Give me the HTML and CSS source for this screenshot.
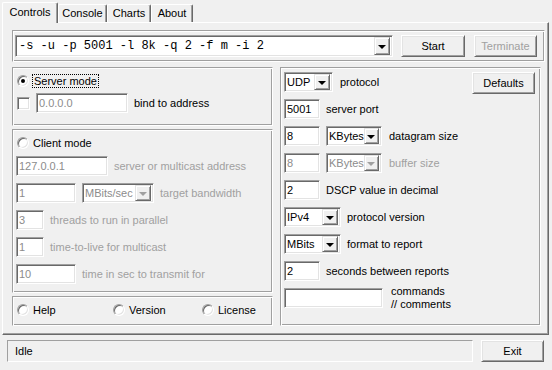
FILE: index.html
```html
<!DOCTYPE html>
<html lang="en">
<head>
    <meta charset="UTF-8">
    <title>Iperf</title>
    <link rel="stylesheet" href="styles.css">
</head>
<body>
<div class="window">
    <div class="tabs">
        <div class="tab active t-controls">Controls</div>
        <div class="tab t-console">Console</div>
        <div class="tab t-charts">Charts</div>
        <div class="tab t-about">About</div>
    </div>

    <div class="page">
        <div class="cmd-frame">
            <div class="combo cmd-combo">
                <span class="combo-text">-s -u -p 5001 -l 8k -q 2 -f m -i 2</span>
                <span class="arrow-btn"><span class="tri"></span></span>
            </div>
            <div class="btn start">Start</div>
            <div class="btn terminate disabled">Terminate</div>
        </div>

        <div class="panels">
            <div class="left-col">
                <div class="frame server-frame">
                    <div class="row radio-row">
                        <span class="radio checked"></span>
                        <span class="focus">Server mode</span>
                    </div>
                    <div class="row">
                        <span class="check"></span>
                        <span class="edit dim w92">0.0.0.0</span>
                        <span class="label">bind to address</span>
                    </div>
                </div>

                <div class="frame client-frame">
                    <div class="row radio-row">
                        <span class="radio"></span>
                        <span class="label">Client mode</span>
                    </div>
                    <div class="row">
                        <span class="edit dim w92">127.0.0.1</span>
                        <span class="label gray">server or multicast address</span>
                    </div>
                    <div class="row">
                        <span class="edit dim w60">1</span>
                        <span class="combo w72 disabled"><span class="combo-text">MBits/sec</span><span class="arrow-btn"><span class="tri"></span></span></span>
                        <span class="label gray">target bandwidth</span>
                    </div>
                    <div class="row">
                        <span class="edit dim w27">3</span>
                        <span class="label gray">threads to run in parallel</span>
                    </div>
                    <div class="row">
                        <span class="edit dim w27">1</span>
                        <span class="label gray">time-to-live for multicast</span>
                    </div>
                    <div class="row">
                        <span class="edit dim w60">10</span>
                        <span class="label gray">time in sec to transmit for</span>
                    </div>
                </div>

                <div class="frame help-frame">
                    <div class="opt"><span class="radio"></span><span class="label">Help</span></div>
                    <div class="opt version"><span class="radio"></span><span class="label">Version</span></div>
                    <div class="opt license"><span class="radio"></span><span class="label">License</span></div>
                </div>
            </div>

            <div class="frame right-col">
                <div class="row">
                    <span class="combo w49"><span class="combo-text">UDP</span><span class="arrow-btn"><span class="tri"></span></span></span>
                    <span class="label">protocol</span>
                    <div class="btn defaults">Defaults</div>
                </div>
                <div class="row">
                    <span class="edit w36">5001</span>
                    <span class="label">server port</span>
                </div>
                <div class="row">
                    <span class="edit w36">8</span>
                    <span class="combo w56"><span class="combo-text">KBytes</span><span class="arrow-btn"><span class="tri"></span></span></span>
                    <span class="label">datagram size</span>
                </div>
                <div class="row">
                    <span class="edit dim w36">8</span>
                    <span class="combo w56 disabled"><span class="combo-text">KBytes</span><span class="arrow-btn"><span class="tri"></span></span></span>
                    <span class="label gray">buffer size</span>
                </div>
                <div class="row">
                    <span class="edit w36">2</span>
                    <span class="label">DSCP value in decimal</span>
                </div>
                <div class="row">
                    <span class="combo w57"><span class="combo-text">IPv4</span><span class="arrow-btn"><span class="tri"></span></span></span>
                    <span class="label">protocol version</span>
                </div>
                <div class="row">
                    <span class="combo w57"><span class="combo-text">MBits</span><span class="arrow-btn"><span class="tri"></span></span></span>
                    <span class="label">format to report</span>
                </div>
                <div class="row">
                    <span class="edit w36">2</span>
                    <span class="label">seconds between reports</span>
                </div>
                <div class="row">
                    <span class="edit w99"></span>
                    <span class="label two-line">commands<br>// comments</span>
                </div>
            </div>
        </div>
    </div>

    <div class="statusbar">
        <div class="status-text">Idle</div>
        <div class="btn exit">Exit</div>
    </div>
</div>
</body>
</html>
```

FILE: styles.css
```css
/* classic windows dialog */
body {
    margin: 0;
    background-color: #f0f0f0;
    font: 11px "Liberation Sans", Arial, sans-serif;
    color: #000;
}
.window {
    width: 552px;
    height: 370px;
    overflow: hidden;
}

/* tabs */
.tabs {
    display: flex;
    align-items: flex-end;
    height: 22px;
    padding-left: 2px;
    position: relative;
    z-index: 1;
}
.tab {
    height: 18px;
    line-height: 17px;
    text-align: center;
    box-sizing: border-box;
    border-top: 1px solid #fff;
    border-left: 1px solid #fff;
    border-right: 1px solid #696969;
    box-shadow: inset -1px 0 #a0a0a0;
    border-radius: 2px 2px 0 0;
    flex: none;
}
.tab.active {
    height: 21px;
    line-height: 18px;
    margin-bottom: -1px;
    background: #f0f0f0;
}
.t-controls { width: 56px; }
.t-console { width: 49px; }
.t-charts { width: 44px; }
.t-about { width: 42px; }

/* tab page */
.page {
    margin-left: 2px;
    width: 547px;
    height: 313px;
    box-sizing: border-box;
    border: 1px solid;
    border-color: #fff #696969 #696969 #fff;
    box-shadow: inset -1px -1px #a0a0a0;
    padding: 7px 3px 0 9px;
}

.frame {
    box-sizing: border-box;
    border: 1px solid;
    border-color: #a0a0a0 #fff #fff #a0a0a0;
    box-shadow: inset 1px 1px #fff, inset -1px -1px #a0a0a0;
}

.cmd-frame {
    display: flex;
    height: 32px;
    box-sizing: border-box;
    border: 1px solid;
    border-color: #a0a0a0 #fff #fff #a0a0a0;
    box-shadow: inset 1px 1px #fff, inset -1px -1px #a0a0a0;
    padding: 4px 0 0 2px;
}

/* controls */
.edit, .combo {
    display: flex;
    align-items: center;
    height: 20px;
    box-sizing: border-box;
    background: #fff;
    border: 1px solid;
    border-color: #a0a0a0 #fff #fff #a0a0a0;
    box-shadow: inset 1px 1px #696969, inset -1px -1px #e3e3e3;
    padding: 0 2px 0 2px;
    white-space: nowrap;
    flex: none;
}
.edit.dim, .combo.disabled .combo-text {
    color: #8c8c8c;
}
.combo {
    padding-right: 2px;
}
.combo-text {
    flex: 1;
}
.arrow-btn {
    width: 16px;
    height: 16px;
    box-sizing: border-box;
    display: flex;
    align-items: center;
    justify-content: center;
    background: #f0f0f0;
    border: 1px solid;
    border-color: #e3e3e3 #696969 #696969 #e3e3e3;
    box-shadow: inset 1px 1px #fff, inset -1px -1px #a0a0a0;
}
.tri {
    width: 0;
    height: 0;
    border-left: 4px solid transparent;
    border-right: 4px solid transparent;
    border-top: 4px solid #000;
    margin-top: 1px;
}
.combo.disabled .tri {
    border-top-color: #a0a0a0;
}

.cmd-combo {
    width: 378px;
    height: 22px;
    padding-left: 3px;
    font: 12px "Liberation Mono", "Courier New", monospace;
}
.cmd-combo .arrow-btn {
    height: 18px;
}

.btn {
    display: flex;
    align-items: center;
    justify-content: center;
    height: 22px;
    width: 63px;
    box-sizing: border-box;
    border: 1px solid;
    border-color: #fff #696969 #696969 #fff;
    box-shadow: inset 1px 1px #e3e3e3, inset -1px -1px #a0a0a0;
    flex: none;
}
.btn.disabled {
    color: #a0a0a0;
}
.start {
    margin-left: 8px;
    width: 64px;
}
.terminate {
    margin-left: 9px;
}

.w27 { width: 28px; }
.w36 { width: 36px; }
.w49 { width: 49px; }
.w56 { width: 56px; }
.w57 { width: 57px; }
.w60 { width: 60px; }
.w72 { width: 72px; }
.w92 { width: 92px; }
.w99 { width: 99px; }

.label {
    white-space: nowrap;
}
.gray {
    color: #a0a0a0;
}

/* panels */
.panels {
    display: flex;
    gap: 7px;
    margin-top: 5px;
}
.left-col {
    width: 261px;
    height: 259px;
    display: flex;
    flex-direction: column;
    gap: 3px;
}
.right-col {
    width: 261px;
    height: 259px;
    padding: 4px 0 0 3px;
    display: flex;
    flex-direction: column;
    gap: 7px;
}

.row {
    display: flex;
    align-items: center;
    gap: 6px;
    height: 20px;
}
.right-col .row:nth-child(3) .label,
.right-col .row:nth-child(4) .label,
.right-col .row:first-child .label {
    margin-left: 1px;
}

.server-frame {
    height: 59px;
    padding: 5px 0 0 4px;
    display: flex;
    flex-direction: column;
    gap: 5px;
}
.server-frame .radio-row {
    height: 15px;
}
.client-frame {
    height: 164px;
    padding: 6px 0 0 3px;
    display: flex;
    flex-direction: column;
    gap: 7px;
}
.client-frame .radio-row {
    height: 13px;
    padding-left: 1px;
}
.help-frame {
    flex: 1;
    display: flex;
    align-items: center;
    padding: 0 0 2px 4px;
}
.opt {
    display: flex;
    align-items: center;
    gap: 4px;
    width: 96px;
    flex: none;
}
.opt.version {
    width: 89px;
}
.opt.license {
    width: auto;
}

.radio {
    position: relative;
    width: 12px;
    height: 12px;
    box-sizing: border-box;
    border-radius: 50%;
    background: #fff;
    border: 1px solid;
    border-color: #a0a0a0 #fff #fff #a0a0a0;
    box-shadow: inset 1px 1px #696969, inset -1px -1px #e3e3e3;
    flex: none;
}
.radio.checked::after {
    content: "";
    position: absolute;
    left: 3px;
    top: 3px;
    width: 4px;
    height: 4px;
    border-radius: 50%;
    background: #000;
}
.radio-row {
    gap: 4px;
}
.focus {
    outline: 1px dotted #000;
    padding: 0 1px;
}
.check {
    width: 13px;
    height: 13px;
    box-sizing: border-box;
    background: #fff;
    border: 1px solid;
    border-color: #a0a0a0 #fff #fff #a0a0a0;
    box-shadow: inset 1px 1px #696969, inset -1px -1px #e3e3e3;
    flex: none;
}
.defaults {
    margin-left: auto;
    margin-right: 5px;
    align-self: flex-start;
}
.two-line {
    line-height: 13px;
    margin-left: 2px;
}

/* status bar */
.statusbar {
    display: flex;
    padding: 5px 0 0 7px;
}
.status-text {
    width: 466px;
    height: 22px;
    box-sizing: border-box;
    border: 1px solid;
    border-color: #a0a0a0 #fff #fff #a0a0a0;
    padding-left: 7px;
    line-height: 20px;
}
.exit {
    margin-left: 8px;
}
```
